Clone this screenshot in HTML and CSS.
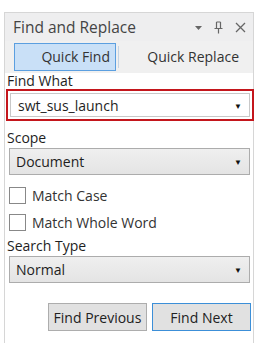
FILE: index.html
```html
<!DOCTYPE html>
<html lang="en">

<head>
    <meta charset="UTF-8">
    <meta name="viewport" content="width=device-width, initial-scale=1.0">
    <title>Find and Replace</title>
    <link rel="stylesheet" href="styles.css">
</head>

<body>
    <div class="panel">
        <div class="title">
            <span>Find and Replace</span>
            <div class="title-icons">
                <svg width="7" height="5" viewBox="0 0 7 5" class="drop">
                    <path d="M0 0h7L3.5 4z" fill="#666" />
                </svg>
                <svg width="9" height="13" viewBox="0 0 9 13">
                    <path d="M2.5 1h4M2.5 1v6M6.5 1v6M0.5 7.5h8M4.5 7.5v5" stroke="#666" stroke-width="1.2" fill="none" />
                </svg>
                <svg width="11" height="11" viewBox="0 0 11 11">
                    <path d="M1 1l9 9M10 1l-9 9" stroke="#666" stroke-width="1.3" fill="none" />
                </svg>
            </div>
        </div>
        <div class="tabs">
            <div class="tab active">Quick Find</div>
            <div class="sep"></div>
            <div class="tab">Quick Replace</div>
        </div>
        <div class="body">
            <p class="label first">Find What</p>
            <div class="highlight">
                <div class="combo edit">
                    <span>swt_sus_launch</span>
                    <span class="arrow">&#9660;</span>
                </div>
            </div>
            <p class="label">Scope</p>
            <div class="combo">
                <span>Document</span>
                <span class="arrow">&#9660;</span>
            </div>
            <div class="checks">
                <label class="check"><span class="box"></span>Match Case</label>
                <label class="check"><span class="box"></span>Match Whole Word</label>
            </div>
            <p class="label tight">Search Type</p>
            <div class="combo">
                <span>Normal</span>
                <span class="arrow">&#9660;</span>
            </div>
            <div class="buttons">
                <button class="btn">Find Previous</button>
                <button class="btn default">Find Next</button>
            </div>
        </div>
    </div>
</body>

</html>
```

FILE: styles.css
```css
* {
    box-sizing: border-box;
    padding: 0;
    margin: 0;
}

body {
    background-color: #fff;
    font-family: "Open Sans", "Noto Sans", sans-serif;
    font-size: 14px;
    color: #1e1e1e;
}

.panel {
    width: 250px;
    height: 331px;
    margin: 12px 0 0 4px;
    border: 1px solid #d6d6d6;
    border-bottom: 0;
}

.title {
    display: flex;
    align-items: center;
    justify-content: space-between;
    height: 28px;
    padding: 0 7px 0 8px;
    background-color: #eeeeef;
    font-size: 15.5px;
    color: #444;
}

.title-icons {
    display: flex;
    align-items: center;
    gap: 12px;
}

.drop {
    margin-top: 3px;
}

.tabs {
    display: flex;
    align-items: center;
    height: 32px;
    padding: 0 8px 0 9px;
    background-color: #f0f0f0;
}

.tab {
    flex: 1;
    height: 28px;
    line-height: 26px;
    text-align: right;
    padding-right: 5px;
    border: 1px solid transparent;
    color: #333;
}

.tab.active {
    flex: 0 0 102px;
    background-color: #c9e0f7;
    border-color: #5b9fe0;
}

.sep {
    width: 1px;
    height: 22px;
    background-color: #c4d4e4;
    margin: 0 2px;
}

.body {
    padding: 0 2px 0 1px;
}

.label {
    line-height: 20px;
    margin-top: 7px;
    padding-left: 1px;
}

.label.first {
    line-height: 16px;
    margin-top: 0;
}

.label.tight {
    margin-top: 0;
}

.highlight {
    height: 32px;
    border: 2px solid #c4161c;
    padding: 2px 2px;
    margin-right: -3px;
}

.combo {
    display: flex;
    justify-content: space-between;
    align-items: center;
    height: 27px;
    margin: 0 1px 0 3px;
    padding: 0 7px 0 6px;
    border: 1px solid #acacac;
    background: linear-gradient(#efefef, #e4e4e4);
}

.combo.edit {
    height: 24px;
    margin: 0;
    padding-left: 7px;
    background: #fff;
    border-color: #c8c8c8;
}

.arrow {
    font-size: 8px;
    color: #111;
}

.checks {
    padding-top: 7px;
}

.check {
    display: flex;
    align-items: center;
    gap: 6px;
    height: 27px;
    padding-left: 3px;
    color: #333;
}

.box {
    width: 17px;
    height: 17px;
    border: 1px solid #888;
    background-color: #fff;
}

.buttons {
    display: flex;
    justify-content: flex-end;
    gap: 5px;
    padding: 20px 0 0 0;
}

.btn {
    width: 99px;
    height: 28px;
    font-family: "Open Sans", "Noto Sans", sans-serif;
    font-size: 14px;
    color: #222;
    background-color: #e1e1e1;
    border: 1px solid #adadad;
}

.btn.default {
    border-color: #3c8fd8;
}
```
